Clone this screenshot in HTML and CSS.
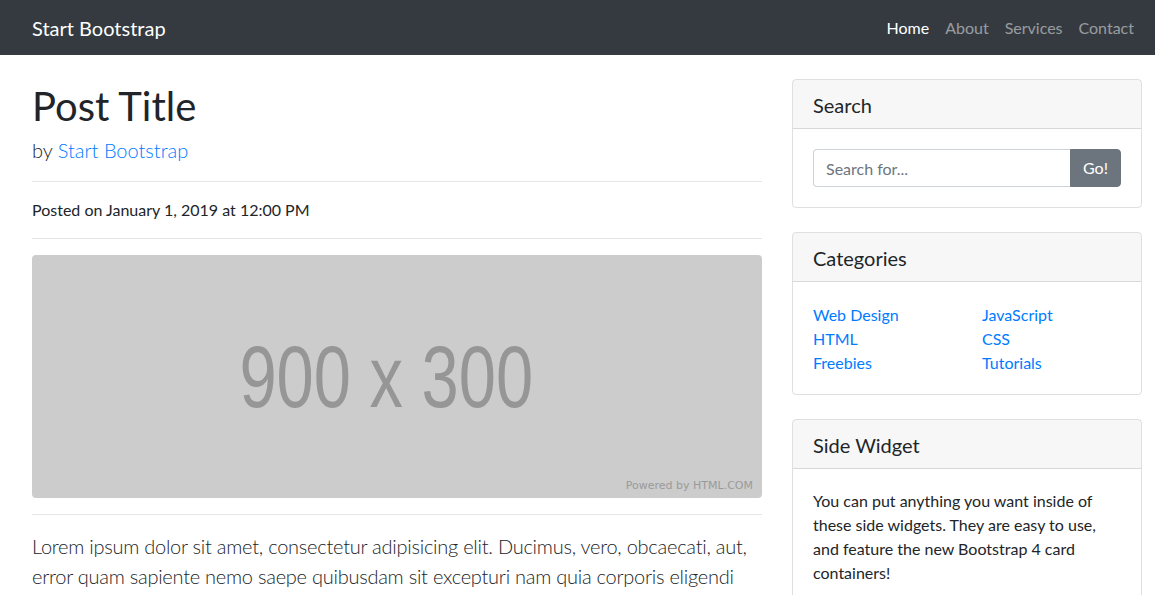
FILE: index.html
```html
<!DOCTYPE html>
<html lang="en">
<head>
<meta charset="utf-8">
<title>Blog Post - Start Bootstrap</title>
<link rel="stylesheet" href="styles.css">
</head>
<body>
<nav class="navbar">
  <div class="container nav-inner">
    <a class="brand" href="#">Start Bootstrap</a>
    <ul class="nav-links">
      <li><a class="nav-link active" href="#">Home</a></li>
      <li><a class="nav-link" href="#">About</a></li>
      <li><a class="nav-link" href="#">Services</a></li>
      <li><a class="nav-link" href="#">Contact</a></li>
    </ul>
  </div>
</nav>

<div class="container">
  <div class="row">
    <main class="col-main">
      <h1 class="post-title">Post Title</h1>
      <p class="lead">by <a href="#">Start Bootstrap</a></p>
      <hr>
      <p>Posted on January 1, 2019 at 12:00 PM</p>
      <hr>
      <div class="placeholder">
        <span class="ph-size">900 x 300</span>
        <span class="ph-credit">Powered by HTML.COM</span>
      </div>
      <hr>
      <p class="lead">Lorem ipsum dolor sit amet, consectetur adipisicing elit. Ducimus, vero, obcaecati, aut, error quam sapiente nemo saepe quibusdam sit excepturi nam quia corporis eligendi eos magni recusandae laborum minus inventore?</p>
    </main>

    <aside class="col-side">
      <div class="card">
        <h5 class="card-header">Search</h5>
        <div class="card-body">
          <div class="input-group">
            <input class="form-control" type="text" placeholder="Search for...">
            <button class="btn" type="button">Go!</button>
          </div>
        </div>
      </div>

      <div class="card">
        <h5 class="card-header">Categories</h5>
        <div class="card-body">
          <div class="cat-grid">
            <ul class="list">
              <li><a href="#">Web Design</a></li>
              <li><a href="#">HTML</a></li>
              <li><a href="#">Freebies</a></li>
            </ul>
            <ul class="list">
              <li><a href="#">JavaScript</a></li>
              <li><a href="#">CSS</a></li>
              <li><a href="#">Tutorials</a></li>
            </ul>
          </div>
        </div>
      </div>

      <div class="card">
        <h5 class="card-header">Side Widget</h5>
        <div class="card-body">
          You can put anything you want inside of these side widgets. They are easy to use, and feature the new Bootstrap 4 card containers!
        </div>
      </div>
    </aside>
  </div>
</div>
</body>
</html>
```
FILE: styles.css
```css
* { box-sizing: border-box; }
html, body { margin: 0; }
body {
  font-family: Lato, "Open Sans", sans-serif;
  font-size: 16px;
  line-height: 1.5;
  color: #212529;
  background: #fff;
}
a { color: #007bff; text-decoration: none; }
p { margin: 0 0 16px; }
hr {
  margin: 16px 0;
  border: 0;
  border-top: 1px solid rgba(0,0,0,.1);
}
.container {
  width: 1140px;
  margin-left: 17px;
  padding: 0 15px;
}
.navbar {
  background: #343a40;
  padding: 8px 0;
  height: 55px;
}
.nav-inner {
  display: flex;
  align-items: center;
  justify-content: space-between;
  height: 39px;
}
.brand {
  color: #fff;
  font-size: 20px;
  line-height: 30px;
}
.nav-links {
  list-style: none;
  margin: 0;
  padding: 0;
  display: flex;
}
.nav-link {
  display: block;
  padding: 8px;
  color: rgba(255,255,255,.5);
}
.nav-link.active { color: #fff; }

.row { display: flex; gap: 30px; }
.col-main { width: 730px; }
.col-side { width: 350px; }

.post-title {
  margin: 27px 0 5px;
  font-size: 40px;
  font-weight: 400;
  line-height: 1.2;
}
.lead { font-size: 20px; font-weight: 300; }
.col-main > p.lead:last-child { letter-spacing: -0.25px; margin-top: 1px; }

.placeholder {
  height: 243px;
  background: #ccc;
  border-radius: 4px;
  display: flex;
  align-items: center;
  justify-content: center;
  position: relative;
}
.ph-size {
  font-family: "Liberation Sans", Arial, sans-serif;
  font-size: 88px;
  color: #969696;
  transform: scaleX(.76);
  line-height: 1;
  margin-right: 21px;
}
.ph-credit {
  position: absolute;
  right: 9px;
  bottom: 4px;
  font-family: "DejaVu Sans", sans-serif;
  font-size: 11px;
  color: #9a9a9a;
}

.card {
  margin: 24px 0;
  border: 1px solid rgba(0,0,0,.125);
  border-radius: 4px;
  overflow: hidden;
}
.card-header {
  margin: 0;
  padding: 13px 20px 11px;
  font-size: 20px;
  font-weight: 400;
  line-height: 1.2;
  background: rgba(0,0,0,.03);
  border-bottom: 1px solid rgba(0,0,0,.125);
}
.card-body { padding: 20px; }
.input-group { display: flex; }
.form-control {
  flex: 1;
  min-width: 0;
  height: 38px;
  padding: 6px 12px;
  font: inherit;
  color: #495057;
  border: 1px solid #ced4da;
  border-right: 0;
  border-radius: 4px 0 0 4px;
}
.form-control::placeholder { color: #6c757d; }
.btn {
  font: inherit;
  padding: 6px 12px;
  color: #fff;
  background: #6c757d;
  border: 1px solid #6c757d;
  border-radius: 0 4px 4px 0;
}
.cat-grid { display: grid; grid-template-columns: 1fr 1fr; gap: 30px; }
.list { list-style: none; margin: 0; padding: 0; }
.list li { padding-top: 1px; margin-bottom: -1px; }
```
